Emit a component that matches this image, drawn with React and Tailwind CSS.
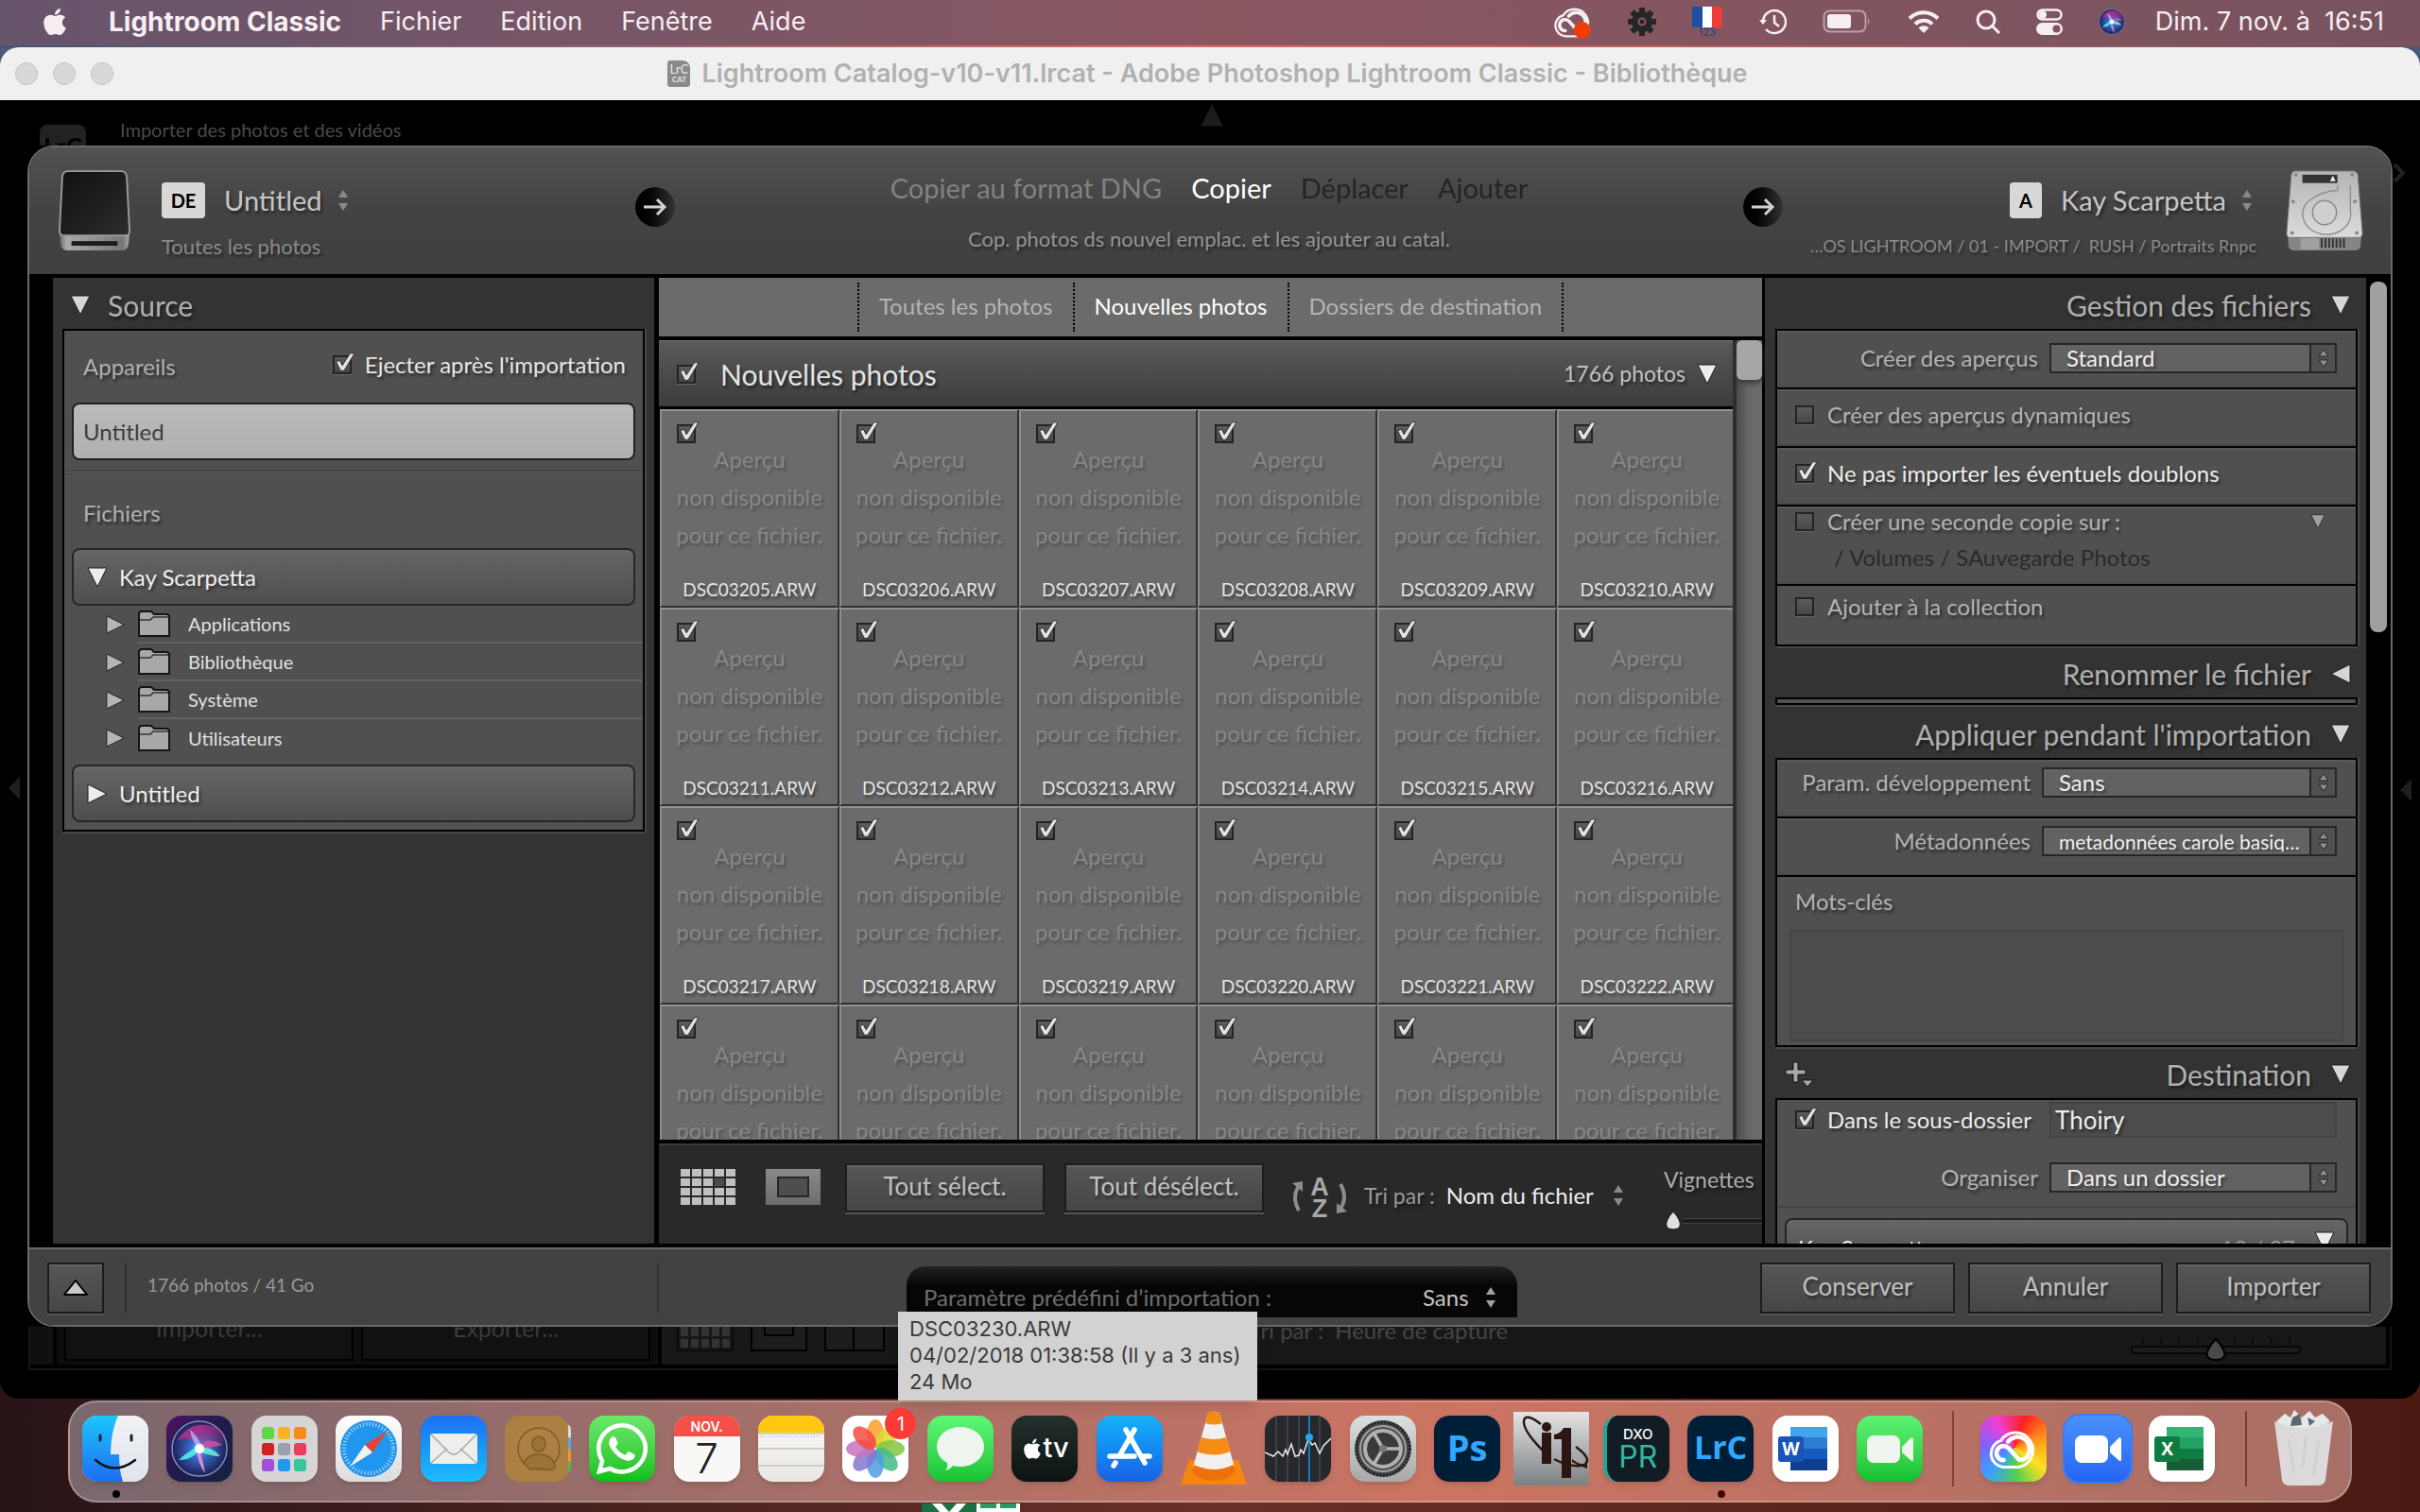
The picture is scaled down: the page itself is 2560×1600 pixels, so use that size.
import React from "react";
import { FaApple, FaWhatsapp } from "react-icons/fa";

const shadow = "[text-shadow:2px_3px_3px_rgba(0,0,0,0.45)]";
const lr = 'font-["Lato","Noto_Sans",sans-serif]';
const mac = 'font-["Inter","Liberation_Sans",sans-serif]';

/* ---------- small shared drawings ---------- */

function Tri({ dir = "down", size = 22, fill = "#d6d6d6" }) {
  const pts = {
    down: "1,1 21,1 11,21",
    up: "1,21 21,21 11,1",
    left: "21,1 21,21 1,11",
    right: "1,1 1,21 21,11",
  };
  return (
    <svg width={size} height={size} viewBox="0 0 22 22" className="shrink-0" aria-hidden="true">
      <polygon points={pts[dir]} fill={fill} stroke="#1c1c1c" strokeWidth="1" />
    </svg>
  );
}

function UpDown({ className = "text-[#8a8a8a]" }) {
  return (
    <svg width="12" height="24" viewBox="0 0 12 24" className={`shrink-0 ${className}`} aria-hidden="true">
      <path d="M6 1 11 9H1ZM6 23 1 15h10Z" fill="currentColor" />
    </svg>
  );
}

function Check({ checked = false, label }) {
  return (
    <span className="relative block size-5 shrink-0">
      <input
        type="checkbox"
        defaultChecked={checked}
        aria-label={label}
        className="peer block size-5 appearance-none border-2 border-[#232323] bg-linear-to-b from-[#5c5c5c] to-[#484848] shadow-[0_1px_0_#6a6a6a]"
      />
      <svg
        viewBox="0 0 26 26"
        className="pointer-events-none absolute -top-1 left-0 hidden size-6 peer-checked:block"
        aria-hidden="true"
      >
        <path d="M4 12 8 10 11 16 20 2 25 2 13 22 9 22Z" fill="#e2e2e2" stroke="#2a2a2a" strokeWidth="1" />
      </svg>
    </span>
  );
}

function Select({ label, value, width, size = "text-[24px]" }) {
  return (
    <label className="flex items-center justify-end gap-3">
      <span className={`text-[24px] leading-8 text-[#b3b3b3] ${shadow}`}>{label}</span>
      <span className={`relative block ${width}`}>
        <select
          className={`block h-8 w-full appearance-none truncate border-2 border-[#262626] bg-[#626262] pr-9 pl-4 leading-none text-[#efefef] ${size} ${shadow}`}
        >
          <option>{value}</option>
        </select>
        <span className="pointer-events-none absolute top-0 right-0 flex h-8 w-[29px] items-center justify-center border-2 border-[#262626] bg-[#505050]">
          <svg width="14" height="20" viewBox="0 0 14 20" aria-hidden="true">
            <path d="M7 1 12 8H2ZM7 19 2 12h10Z" fill="#8f8f8f" stroke="#222" />
          </svg>
        </span>
      </span>
    </label>
  );
}

function Button({ children, className = "" }) {
  return (
    <button
      type="button"
      className={`flex items-center justify-center border-2 border-[#1c1c1c] bg-linear-to-b from-[#565656] to-[#464646] text-[26px] leading-none text-[#c0c0c0] shadow-[0_2px_0_#555,inset_0_2px_0_#636363] ${shadow} ${className}`}
    >
      {children}
    </button>
  );
}

/* ---------- macOS menu bar ---------- */

const CloudPath = (
  <g fill="none" stroke="currentColor" strokeLinecap="round">
    <path d="M14 37A12.500 12.500 0 0 1 11.500 12.500 16 16 0 1 1 28 37Z" strokeWidth="2.600" />
    <path d="M14 30.500A6.500 6.500 0 1 1 18.500 19.500L28 30Q33 31 35.500 27" strokeWidth="4" />
    <path d="M18 13.500A10 10 0 1 1 35.500 27" strokeWidth="4" />
  </g>
);

function SiriOrb({ size }) {
  return (
    <svg width={size} height={size} viewBox="0 0 60 60" aria-hidden="true">
      <defs>
        <radialGradient id="orb" cx="50%" cy="50%" r="50%">
          <stop offset="0" stopColor="#8fe8ff" />
          <stop offset=".3" stopColor="#3a6fd0" />
          <stop offset="1" stopColor="#1b1f55" />
        </radialGradient>
        <linearGradient id="orb2" x1="0" y1="0" x2="1" y2="1">
          <stop offset="0" stopColor="#d62b88" />
          <stop offset="1" stopColor="#d62b88" stopOpacity="0" />
        </linearGradient>
      </defs>
      <circle cx="30" cy="30" r="29" fill="url(#orb)" stroke="#7f8fc0" strokeWidth="1.500" />
      <path d="M6 22Q20 0 42 6T54 28Q40 18 30 30 20 14 6 22Z" fill="url(#orb2)" />
      <path d="M30 28Q38 16 54 26 44 28 30 32Z" fill="#e04f9c" opacity=".8" />
      <path d="M30 30Q42 26 52 38 40 38 29 32Z" fill="#6ff0da" opacity=".85" />
      <path d="M30 30Q24 42 8 42 16 34 28 28Z" fill="#4ff0ea" opacity=".9" />
      <path d="M29 30Q34 42 36 56 28 46 27 30Z" fill="#f08fd8" opacity=".9" />
      <path d="M30 30Q22 24 20 10 30 18 32 29Z" fill="#b7c8ff" opacity=".7" />
      <circle cx="30" cy="30" r="5" fill="#fff" />
    </svg>
  );
}

function MenuBar() {
  return (
    <header
      className={`flex h-12 shrink-0 items-center justify-between bg-linear-to-r from-[#66546b] via-[#8a5761] to-[#78535f] pr-[38px] pb-[2px] pl-[42px] text-[27px] text-[#f6eef2] ${mac}`}
    >
      <nav className="flex items-center gap-[41px]">
        <FaApple className="size-8" />
        <button type="button" className="text-[28px] font-bold">Lightroom Classic</button>
        <button type="button">Fichier</button>
        <button type="button">Edition</button>
        <button type="button">Fenêtre</button>
        <button type="button">Aide</button>
      </nav>
      <div className="flex items-center">
        <div className="mr-8 flex items-center gap-[38px]">
          <svg width="42" height="36" viewBox="0 0 44 40" aria-hidden="true">
            {CloudPath}
            <circle cx="34" cy="30" r="10" fill="#f03c00" />
          </svg>
          <svg width="30" height="30" viewBox="0 0 30 30" aria-hidden="true">
            <g fill="#262626">
              <circle cx="15" cy="15" r="11" />
              {[0, 45, 90, 135, 180, 225, 270, 315].map((a) => (
                <rect key={a} x="12" y="0" width="6" height="6" transform={`rotate(${a} 15 15)`} />
              ))}
            </g>
            <circle cx="15" cy="15" r="3.500" fill="none" stroke="#8a5560" strokeWidth="2" />
          </svg>
          <span className="flex w-8 flex-col items-center">
            <span className="flex h-[22px] w-8">
              <span className="flex-1 bg-[#1f4fa0]" />
              <span className="flex-1 bg-white" />
              <span className="flex-1 bg-[#f03c38]" />
            </span>
            <span className="text-[11px] leading-none text-[#1f3f80]">123</span>
          </span>
          <svg width="30" height="28" viewBox="0 0 30 28" fill="none" stroke="currentColor" strokeWidth="2.500" aria-hidden="true">
            <path d="M5 14A12 12 0 1 1 8 22" />
            <path d="M17 7v8l5 4" />
            <path d="M1 12 9 12 5 17Z" fill="currentColor" stroke="none" />
          </svg>
          <svg width="52" height="26" viewBox="0 0 52 26" aria-hidden="true">
            <rect x="1.500" y="1.500" width="44" height="22" rx="6" fill="none" stroke="currentColor" strokeOpacity=".5" strokeWidth="2" />
            <rect x="5" y="5" width="25" height="15" rx="3" fill="currentColor" />
            <path d="M48 9q3 3.500 0 7Z" fill="currentColor" opacity=".5" />
          </svg>
          <svg width="34" height="26" viewBox="0 0 34 26" fill="none" stroke="currentColor" strokeWidth="4" aria-hidden="true">
            <path d="M2 9.500a21 21 0 0 1 30 0" />
            <path d="M8 15.500a12.500 12.500 0 0 1 18 0" />
            <path d="M17 25 11.500 19.500a8 8 0 0 1 11 0Z" fill="currentColor" stroke="none" />
          </svg>
          <svg width="26" height="26" viewBox="0 0 26 26" fill="none" stroke="currentColor" strokeWidth="3" aria-hidden="true">
            <circle cx="11" cy="11" r="9" />
            <path d="M18 18 25 25" />
          </svg>
          <svg width="28" height="28" viewBox="0 0 28 28" aria-hidden="true">
            <rect x="1.500" y="1.500" width="25" height="10" rx="5" fill="none" stroke="currentColor" strokeWidth="2.500" />
            <circle cx="7" cy="6.500" r="4" fill="currentColor" />
            <rect x="0" y="15" width="28" height="13" rx="6.500" fill="currentColor" />
            <circle cx="21.500" cy="21.500" r="4" fill="#82545f" />
          </svg>
          <SiriOrb size={28} />
        </div>
        <time className="whitespace-pre">Dim. 7 nov. à  16:51</time>
      </div>
    </header>
  );
}

function TitleBar() {
  return (
    <div className={`flex h-14 shrink-0 items-center rounded-t-[20px] bg-[#f0f0f0] px-4 ${mac}`}>
      <div className="flex w-[120px] gap-4">
        {["Fermer", "Réduire", "Agrandir"].map((n) => (
          <button key={n} type="button" aria-label={n} className="size-6 rounded-full border border-[#c2c2c2] bg-[#d8d8d8]" />
        ))}
      </div>
      <div className="flex flex-1 items-center justify-center gap-3 pr-[125px]">
        <span className='flex h-7 w-6 flex-col items-center justify-center rounded-[3px] rounded-tr-lg bg-[#8a8a8a] font-["Lato",sans-serif] text-[#e8e8e8]'>
          <span className="text-[13px] leading-[13px]">LrC</span>
          <span className="text-[8px] leading-[9px] font-bold">CAT</span>
        </span>
        <h1 className="text-[27px] font-semibold text-[#b1b1b1]">
          Lightroom Catalog-v10-v11.lrcat - Adobe Photoshop Lightroom Classic - Bibliothèque
        </h1>
      </div>
    </div>
  );
}

/* ---------- dialog header ---------- */

function DriveIcon() {
  return (
    <svg width="76" height="86" viewBox="0 0 78 88" aria-hidden="true">
      <defs>
        <linearGradient id="drv" x1="0" y1="0" x2="1" y2="1">
          <stop offset="0" stopColor="#101010" />
          <stop offset="1" stopColor="#2c2c2c" />
        </linearGradient>
        <linearGradient id="drvb" x1="0" y1="0" x2="1" y2="0">
          <stop offset="0" stopColor="#666" />
          <stop offset=".1" stopColor="#aaa" />
          <stop offset=".9" stopColor="#777" />
          <stop offset="1" stopColor="#aaa" />
        </linearGradient>
      </defs>
      <path d="M1 66 2 80Q3 87 9 87H69Q75 87 76 80L77 66Z" fill="url(#drvb)" />
      <path d="M10 1H68Q73 1 74 7L77 66Q77 71 72 71H6Q1 71 1 66L4 7Q5 1 10 1Z" fill="url(#drv)" stroke="#9a9a9a" strokeWidth="2" />
      <rect x="14" y="77" width="50" height="5" fill="#1c1c1c" />
    </svg>
  );
}

function HardDiskIcon() {
  return (
    <svg width="84" height="86" viewBox="0 0 84 88" aria-hidden="true">
      <defs>
        <linearGradient id="hd" x1="0" y1="0" x2="0" y2="1">
          <stop offset="0" stopColor="#b4b4b4" />
          <stop offset="1" stopColor="#dcdcdc" />
        </linearGradient>
      </defs>
      <path d="M2 70 3 82Q4 87 9 87H75Q80 87 81 82L82 70Z" fill="#858585" />
      <rect x="16" y="73" width="20" height="13" fill="#a0a0a0" />
      <g fill="#333">
        {[38, 42, 46, 50, 54, 58, 62].map((x) => (
          <rect key={x} x={x} y="74" width="2" height="10" />
        ))}
      </g>
      <path d="M10 1H73Q77 1 78 5L83 68Q83 73 79 73H5Q1 73 1 68L6 5Q7 1 10 1Z" fill="url(#hd)" stroke="#777" />
      <rect x="18" y="5" width="38" height="9" fill="#333" />
      <path d="M51 6 54 12H48Z" fill="#eee" />
      <path d="M56 17v5Q40 22 24 34A26 22 0 1 0 70 44V17" fill="none" stroke="#909090" strokeWidth="1.500" />
      <circle cx="42" cy="46" r="13" fill="#cfcfcf" stroke="#8a8a8a" strokeWidth="1.500" />
      <g fill="#888">
        <circle cx="11" cy="5" r="2" />
        <circle cx="72" cy="5" r="2" />
        <circle cx="8" cy="34" r="2" />
        <circle cx="75" cy="34" r="2" />
        <circle cx="7" cy="68" r="2" />
        <circle cx="77" cy="68" r="2" />
      </g>
    </svg>
  );
}

function ArrowDisc() {
  return (
    <span className="-mt-2 flex size-[42px] items-center justify-center rounded-full bg-linear-to-r from-black to-[#333]">
      <svg width="26" height="20" viewBox="0 0 26 20" fill="none" stroke="#d2d2d2" strokeWidth="3" aria-hidden="true">
        <path d="M1 10H23M15 2 23 10 15 18" />
      </svg>
    </span>
  );
}

function DialogHeader() {
  return (
    <div className="grid h-[134px] shrink-0 grid-cols-[641px_42px_1fr_42px_643px] items-center bg-linear-to-b from-[#525252] via-[#434343] to-[#404040]">
      <div className="flex items-center gap-[33px] pl-[31px]">
        <DriveIcon />
        <div className="flex flex-col gap-3 pt-5">
          <div className="flex items-center gap-5">
            <span className="flex h-[38px] w-[46px] items-center justify-center rounded bg-[#d8d8d8] text-[20px] font-bold text-black">DE</span>
            <button type="button" className={`flex items-center gap-4 text-[29px] leading-[42px] text-[#c6c6c6] ${shadow}`}>
              Untitled <UpDown />
            </button>
          </div>
          <span className={`text-[22px] leading-[31px] text-[#8a8a8a] ${shadow}`}>Toutes les photos</span>
        </div>
      </div>
      <ArrowDisc />
      <div className="flex flex-col items-center gap-4">
        <div className={`flex gap-[31px] text-[29px] ${shadow}`}>
          <button type="button" className="text-[#828282]">Copier au format DNG</button>
          <button type="button" className="text-white">Copier</button>
          <button type="button" className="text-[#242424] [text-shadow:none]">Déplacer</button>
          <button type="button" className="text-[#242424] [text-shadow:none]">Ajouter</button>
        </div>
        <span className={`text-[22px] leading-8 text-[#949494] ${shadow}`}>Cop. photos ds nouvel emplac. et les ajouter au catal.</span>
      </div>
      <ArrowDisc />
      <div className="flex items-center justify-end gap-[30px] pr-7">
        <div className="flex flex-col items-end gap-3 pt-5">
          <div className="flex items-center gap-5">
            <span className="flex h-[38px] w-[34px] items-center justify-center rounded bg-[#d8d8d8] text-[20px] font-bold text-black">A</span>
            <button type="button" className={`flex items-center gap-4 pr-1 text-[29px] leading-[42px] text-[#c6c6c6] ${shadow}`}>
              Kay Scarpetta <UpDown />
            </button>
          </div>
          <span className={`text-[18px] leading-[31px] whitespace-pre text-[#8a8a8a] ${shadow}`}>
            …OS LIGHTROOM / 01 - IMPORT /  RUSH / Portraits Rnpc
          </span>
        </div>
        <HardDiskIcon />
      </div>
    </div>
  );
}

/* ---------- left panel ---------- */

function Folder() {
  return (
    <svg width="34" height="28" viewBox="0 0 34 28" aria-hidden="true">
      <path d="M1 27V3L3 1H14L17 4H31L33 6V27Z" fill="#a8a8a8" stroke="#151515" strokeWidth="2" />
      <path d="M2 10H13L16 7H32" fill="none" stroke="#333" strokeWidth="1.500" />
    </svg>
  );
}

const volume =
  "mx-2 flex h-[61px] items-center gap-3 rounded-lg border-2 border-[#262626] bg-linear-to-b from-[#666] to-[#4e4e4e] pl-[14px] text-[24px] text-[#efefef]";

function SourcePanel() {
  return (
    <aside className="w-[636px] shrink-0 bg-[#333] px-[10px]">
      <h2 className={`flex h-[54px] items-center gap-[18px] pt-1 pl-2 text-[30px] leading-none text-[#b0b0b0] ${shadow}`}>
        <Tri />
        Source
      </h2>
      <div className="border-2 border-black bg-[#505050] pb-2 shadow-[0_2px_0_#484848,2px_0_0_#484848]">
        <div className="flex h-[76px] items-center justify-between pr-[18px] pl-5">
          <span className={`text-[24px] text-[#b0b0b0] ${shadow}`}>Appareils</span>
          <label className={`-mt-1 flex items-center gap-[14px] text-[24px] text-[#e6e6e6] ${shadow}`}>
            <Check checked />
            Ejecter après l'importation
          </label>
        </div>
        <button
          type="button"
          className="mx-2 flex h-[61px] w-[596px] max-w-full items-center rounded-lg border-2 border-[#202020] bg-linear-to-b from-[#bababa] to-[#b0b0b0] pl-[10px] text-[24px] text-[#3c3c3c]"
        >
          Untitled
        </button>
        <div className="mt-[10px] h-[83px] border-t-2 border-[#464646] pt-[26px] pl-5 shadow-[inset_0_1px_0_#5c5c5c]">
          <span className={`text-[24px] text-[#b0b0b0] ${shadow}`}>Fichiers</span>
        </div>
        <div className={`${volume} ${shadow}`}>
          <Tri fill="#ececec" />
          Kay Scarpetta
        </div>
        <ul>
          {["Applications", "Bibliothèque", "Système", "Utilisateurs"].map((n, i) => (
            <li key={n} className="flex h-10 items-center pl-11">
              <Tri dir="right" size={20} fill="#b5b5b5" />
              <span className={`ml-[14px] flex h-10 flex-1 items-center gap-[19px] text-[20px] text-[#e0e0e0] ${i < 3 ? "border-b-2 border-[#626262]" : ""}`}>
                <Folder />
                {n}
              </span>
            </li>
          ))}
        </ul>
        <div className={`mt-2 ${volume} ${shadow}`}>
          <Tri dir="right" fill="#ececec" />
          Untitled
        </div>
      </div>
    </aside>
  );
}

/* ---------- centre ---------- */

const files = Array.from({ length: 24 }, (_, i) => `DSC0${3205 + i}.ARW`);

function Cell({ name }) {
  return (
    <div className="flex h-[210px] flex-col border-t-2 border-r-2 border-b-2 border-l-2 border-t-[#929292] border-r-[#303030] border-b-[#303030] border-l-[#8c8c8c] bg-[#6b6b6b] pt-[14px]">
      <span className="pl-4">
        <Check checked label={name} />
      </span>
      <p className="-mt-[3px] text-center text-[24px] leading-[40px] text-[#878787] [text-shadow:2px_3px_3px_rgba(0,0,0,0.25)]">
        Aperçu
        <br />
        non disponible
        <br />
        pour ce fichier.
      </p>
      <p className={`mt-[22px] text-center text-[19px] leading-[32px] text-[#e4e4e4] ${shadow}`}>{name}</p>
    </div>
  );
}

function Center() {
  const sep = "h-[52px] border-l-2 border-dotted border-black";
  return (
    <main className="ml-[5px] flex min-w-0 flex-1 flex-col">
      <div className={`flex h-[62px] shrink-0 items-center justify-center gap-[21px] bg-[#6b6b6b] text-[24px] leading-8 text-[#b4b4b4] ${shadow}`}>
        <span className={sep} />
        <button type="button" className="pb-[3px]">Toutes les photos</button>
        <span className={sep} />
        <button type="button" className="pb-[3px] text-white">Nouvelles photos</button>
        <span className={sep} />
        <button type="button" className="pb-[3px]">Dossiers de destination</button>
        <span className={sep} />
      </div>
      <div className="mt-1 flex min-h-0 flex-1">
        <div className="flex min-w-0 flex-1 flex-col overflow-hidden">
          <div className="flex h-[70px] shrink-0 items-center border-t border-[#777] bg-linear-to-b from-[#5a5a5a] to-[#3c3c3c] pr-4 pl-[19px]">
            <Check checked label="Nouvelles photos" />
            <h2 className={`ml-[26px] flex-1 text-[30px] leading-none text-[#e4e4e4] ${shadow}`}>Nouvelles photos</h2>
            <span className={`mr-3 text-[23px] text-[#c2c2c2] ${shadow}`}>1766 photos</span>
            <Tri fill="#ececec" />
          </div>
          <div className="mt-[3px] -mr-1 ml-px grid shrink-0 grid-cols-6">
            {files.map((f) => (
              <Cell key={f} name={f} />
            ))}
          </div>
        </div>
        <div className="w-[31px] border-l-4 border-[#2e2e2e] bg-linear-to-r from-[#4c4c4c] via-[#696969] to-[#6b6b6b]">
          <div className="h-[42px] rounded-md bg-[#a6a6a6] shadow-[0_3px_6px_#333]" />
        </div>
      </div>
      <div className="mt-1 flex h-[106px] shrink-0 items-start border-t-2 border-[#3a3a3a] bg-[#292929] pt-[19px] pl-[23px]">
        <button type="button" aria-label="Grille" className="mt-1.5 grid h-[38px] w-[58px] shrink-0 grid-cols-5 gap-[2px]">
          {Array.from({ length: 20 }, (_, i) => (
            <span key={i} className={i === 8 ? "bg-[#4c4c4c]" : "bg-[#c0c0c0]"} />
          ))}
        </button>
        <button type="button" aria-label="Loupe" className="mt-1.5 ml-8 flex h-[38px] w-[58px] shrink-0 items-center justify-center bg-linear-to-b from-[#8a8a8a] to-[#6c6c6c]">
          <span className="h-[22px] w-[34px] border-2 border-[#262626] bg-[#4e4e4e]" />
        </button>
        <Button className="ml-[26px] h-[52px] w-[211px] shrink-0 pb-1">Tout sélect.</Button>
        <Button className="ml-[21px] h-[52px] w-[211px] shrink-0 pb-1">Tout désélect.</Button>
        <svg width="62" height="48" viewBox="0 0 62 48" className="mt-3 ml-7 shrink-0" aria-hidden="true">
          <g fill="none" stroke="#8c8c8c" strokeWidth="4">
            <path d="M9 38Q1 24 9 12" />
            <path d="M53 10Q61 24 53 36" />
          </g>
          <path d="M2 9 13 7 13 18ZM60 39 49 41 49 30Z" fill="#8c8c8c" />
          <g fill="#a8a8a8" fontFamily="Liberation Sans, sans-serif" fontWeight="700" fontSize="27" textAnchor="middle">
            <text x="31" y="22">A</text>
            <text x="31" y="45">Z</text>
          </g>
        </svg>
        <label className={`mt-4 ml-4 flex items-center gap-3 text-[23px] text-[#999] ${shadow}`}>
          Tri par :
          <select className="w-[164px] appearance-none text-[24px] text-[#ededed]">
            <option>Nom du fichier</option>
          </select>
          <UpDown />
        </label>
        <label className="ml-auto flex w-[104px] shrink-0 flex-col text-[23px] text-[#aaa]">
          <span className={shadow}>Vignettes</span>
          <span className="mt-4 flex h-5 items-center">
            <input type="range" min="0" max="100" defaultValue="0" className="sr-only" />
            <svg width="20" height="20" viewBox="0 0 20 20" aria-hidden="true">
              <path d="M10 0Q19 10 17 16 15 19 10 19T3 16Q1 10 10 0Z" fill="#e0e0e0" stroke="#111" />
            </svg>
            <span className="h-1.5 flex-1 border-y border-[#444] bg-[#1c1c1c]" />
          </span>
        </label>
      </div>
    </main>
  );
}

/* ---------- right panel ---------- */

function PanelTitle({ children, dir = "down", action }) {
  return (
    <h2 className={`flex h-[54px] shrink-0 items-center pt-1 pr-[7px] text-[30px] leading-none text-[#b0b0b0] ${shadow}`}>
      {action}
      <span className="ml-auto">{children}</span>
      <span className="ml-5 flex">
        <Tri dir={dir} />
      </span>
    </h2>
  );
}

const box = "border-2 border-black bg-[#505050] shadow-[0_2px_0_#484848,2px_0_0_#484848]";
const row = "border-b-2 border-black shadow-[inset_0_-2px_0_#484848,inset_0_2px_0_#5a5a5a]";

function Tick({ children, checked, className = "" }) {
  return (
    <label className={`flex items-center gap-[14px] pl-[19px] text-[24px] leading-[30px] ${shadow} ${checked ? "text-[#ececec]" : "text-[#b3b3b3]"} ${className}`}>
      <Check checked={checked} />
      {children}
    </label>
  );
}

function RightPanel() {
  return (
    <aside className="ml-[3px] flex w-[636px] shrink-0 flex-col overflow-hidden bg-[#333] pr-[9px] pl-[11px]">
      <PanelTitle>Gestion des fichiers</PanelTitle>
      <div className={`shrink-0 ${box}`}>
        <div className={`h-[62px] pt-[13px] pr-5 ${row}`}>
          <Select label="Créer des aperçus" value="Standard" width="w-[304px]" />
        </div>
        <div className={`h-[62px] pt-3 ${row}`}>
          <Tick>Créer des aperçus dynamiques</Tick>
        </div>
        <div className={`h-[62px] pt-3 ${row}`}>
          <Tick checked>Ne pas importer les éventuels doublons</Tick>
        </div>
        <div className={`h-[84px] ${row}`}>
          <div className="flex items-center justify-between pt-px pr-8">
            <Tick>Créer une seconde copie sur :</Tick>
            <Tri size={16} fill="#a0a0a0" />
          </div>
          <p className="pt-2 pl-[60px] text-[24px] leading-[30px] text-[#2a2a2a]">/ Volumes / SAuvegarde Photos</p>
        </div>
        <div className="h-[62px] pt-[7px]">
          <Tick>Ajouter à la collection</Tick>
        </div>
      </div>
      <PanelTitle dir="left">Renommer le fichier</PanelTitle>
      <div className={`h-2 shrink-0 ${box}`} />
      <div className="h-[2px] shrink-0" />
      <PanelTitle>Appliquer pendant l'importation</PanelTitle>
      <div className={`shrink-0 ${box}`}>
        <div className={`h-[62px] pt-2 pr-5 ${row}`}>
          <Select label="Param. développement" value="Sans" width="w-[312px]" />
        </div>
        <div className={`h-[62px] pt-2 pr-5 ${row}`}>
          <Select label="Métadonnées" value="metadonnées carole basiq…" width="w-[312px]" size="text-[21px]" />
        </div>
        <label className={`block px-[13px] pt-2 text-[24px] text-[#b3b3b3] ${shadow}`}>
          <span className="block pb-3 pl-[6px] leading-9">Mots-clés</span>
          <textarea className="mb-1 block h-[118px] w-full resize-none border-2 border-[#434343] bg-[#4c4c4c]" />
        </label>
      </div>
      <PanelTitle
        action={
          <button type="button" aria-label="Ajouter" className="ml-[10px]">
            <svg width="32" height="28" viewBox="0 0 32 28" aria-hidden="true">
              <path d="M9 1h5v8h8v5h-8v8H9v-8H1V9h8Z" fill="#a8a8a8" stroke="#111" />
              <path d="M18 20h12l-6 7Z" fill="#a8a8a8" stroke="#111" />
            </svg>
          </button>
        }
      >
        Destination
      </PanelTitle>
      <div className={`min-h-0 flex-1 overflow-hidden border-b-0! ${box}`}>
        <div className="flex items-center justify-between pt-[2px] pr-5">
          <Tick checked>Dans le sous-dossier</Tick>
          <input
            type="text"
            aria-label="Sous-dossier"
            defaultValue="Thoiry"
            className={`h-[38px] w-[304px] border-2 border-[#434343] bg-[#4c4c4c] px-1 text-[26px] text-[#ececec] ${shadow}`}
          />
        </div>
        <div className="h-[74px] border-b-2 border-[#444] pt-[26px] pr-5">
          <Select label="Organiser" value="Dans un dossier" width="w-[304px]" />
        </div>
        <div className={`mx-2 mt-[11px] flex h-[61px] items-start justify-between rounded-t-lg border-2 border-[#262626] bg-linear-to-b from-[#666] to-[#4e4e4e] px-3 pt-3 text-[24px] text-[#efefef] ${shadow}`}>
          Kay Scarpetta
          <span className="flex gap-5 text-[#999]">
            13 / 37 <Tri fill="#ececec" />
          </span>
        </div>
      </div>
    </aside>
  );
}

/* ---------- dialog footer ---------- */

function DialogFooter() {
  return (
    <footer className="relative flex h-[82px] shrink-0 items-start border-t-2 border-[#6a6a6a] bg-[#424242] pt-[14px] pr-[21px] pl-[19px]">
      <Button className="h-[54px] w-[60px]">
        <svg width="28" height="18" viewBox="0 0 28 18" aria-label="Réduire" role="img">
          <path d="M14 1 26 16H2Z" fill="#c8c8c8" stroke="#000" strokeWidth="2" strokeLinejoin="round" />
        </svg>
      </Button>
      <span className="ml-[22px] h-[54px] w-[2px] bg-[#303030]" />
      <span className="ml-[22px] w-[539px] self-start pt-[10px] text-[19px] text-[#9a9a9a]">1766 photos / 41 Go</span>
      <span className="h-[54px] w-[2px] bg-[#303030]" />
      <label className="mt-1 ml-[262px] flex h-[54px] w-[646px] items-center justify-between rounded-t-[20px] bg-linear-to-b from-[#222] to-[#060606] to-40% pt-3 pr-[22px] pl-[18px] text-[24px] text-[#6e6e6e]">
        Paramètre prédéfini d’importation :
        <span className="flex items-center gap-3 text-[#c4c4c4]">
          <select className="w-[54px] appearance-none">
            <option>Sans</option>
          </select>
          <UpDown className="text-[#a0a0a0]" />
        </span>
      </label>
      <div className="ml-auto flex gap-[14px]">
        <Button className="h-[54px] w-[206px] pb-1">Conserver</Button>
        <Button className="h-[54px] w-[206px] pb-1">Annuler</Button>
        <Button className="h-[54px] w-[206px] pb-1">Importer</Button>
      </div>
      <div className={`absolute top-[66px] left-[919px] z-10 w-[380px] bg-[#d2d2d2] px-3 pt-1 pb-[6px] text-[22px] leading-7 whitespace-nowrap text-[#3a3a3a] shadow-lg ${mac}`} role="tooltip">
        <p>DSC03230.ARW</p>
        <p>04/02/2018 01:38:58 (Il y a 3 ans)</p>
        <p>24 Mo</p>
      </div>
    </footer>
  );
}

/* ---------- library window behind the dialog ---------- */

const ghost =
  "flex h-9 flex-1 items-end justify-center overflow-hidden border-2 border-t-0 border-black bg-[#111] pb-5 text-[25px] leading-none text-[#3a3a3a]";

function BackStrip() {
  return (
    <div className="mx-[30px] flex h-[46px] shrink-0 items-stretch overflow-hidden border-x-2 border-b-2 border-[#161616] bg-black pr-1 pb-1">
      <div className="mr-1 w-6 bg-[#101010]" />
      <div className="flex w-[636px] items-start gap-2 bg-[#0d0d0d] px-2">
        <span className={ghost}>Importer...</span>
        <span className={ghost}>Exporter...</span>
      </div>
      <div className="ml-1 flex flex-1 items-start bg-[#171717] pr-[90px] pl-4">
        <span className="grid h-[26px] w-[60px] grid-cols-5 gap-[3px] border-2 border-t-0 border-[#0c0c0c] p-[2px] pt-0">
          {Array.from({ length: 10 }, (_, i) => (
            <span key={i} className="bg-[#333]" />
          ))}
        </span>
        <span className="ml-[18px] h-[26px] w-[60px] border-2 border-t-0 border-black bg-[#1c1c1c] px-3">
          <span className="block h-[10px] border-2 border-t-0 border-black" />
        </span>
        <span className="ml-[18px] h-[26px] w-8 border-2 border-t-0 border-black bg-[#1c1c1c]" />
        <span className="h-[26px] w-8 border-2 border-t-0 border-l-0 border-black bg-[#1c1c1c]" />
        <span className="-mt-3 ml-[386px] h-8 text-[24px] leading-8 whitespace-pre text-[#454545]">Tri par :  Heure de capture</span>
        <svg width="180" height="34" viewBox="0 0 180 34" className="mt-2 ml-auto" aria-hidden="true">
          <g fill="#0a0a0a">
            {[12, 31, 50, 70, 90, 109, 128, 148, 167].map((x) => (
              <rect key={x} x={x} y="4" width="2" height="7" />
            ))}
          </g>
          <rect x="1" y="13" width="178" height="7" rx="3" fill="#1c1c1c" stroke="#060606" strokeWidth="2" />
          <path d="M90 5Q101 17 99 23 97 27 90 27T81 23Q79 17 90 5Z" fill="#4a4a4a" stroke="#000" strokeWidth="2" />
        </svg>
      </div>
    </div>
  );
}

/* ---------- Dock ---------- */

function Tile({ className = "", children }) {
  return (
    <span className={`relative flex size-[70px] shrink-0 items-center justify-center overflow-hidden rounded-[16px] shadow-md ${className}`}>
      {children}
    </span>
  );
}

const Art = ({ children }) => (
  <svg width="70" height="70" viewBox="0 0 70 70" className="absolute inset-0" aria-hidden="true">
    {children}
  </svg>
);

const Camera = ({ fill }) => (
  <Art>
    <rect x="11" y="21" width="35" height="29" rx="7" fill={fill} />
    <path d="M48 33 57 24Q60 22 60 26V46Q60 50 57 47L48 39Z" fill={fill} />
  </Art>
);

function OfficeIcon({ letter, c }) {
  return (
    <Tile className="bg-white">
      <Art>
        <rect x="19" y="12" width="39" height="12" fill={c[0]} />
        <rect x="19" y="23" width="39" height="12" fill={c[1]} />
        <rect x="19" y="35" width="39" height="12" fill={c[2]} />
        <rect x="19" y="46" width="39" height="12" fill={c[3]} />
        <rect x="6" y="22" width="27" height="27" rx="3" fill={c[4]} />
        <text x="19.500" y="42" fill="#fff" fontFamily="Open Sans, sans-serif" fontWeight="700" fontSize="19" textAnchor="middle">
          {letter}
        </text>
      </Art>
    </Tile>
  );
}

const petals = ["#f9a02c", "#d9dc2e", "#84c440", "#45b88a", "#4f9de0", "#8577cc", "#c673bf", "#f44a42"];
const launch = ["#5ed84a", "#fbb320", "#f98a1c", "#d42020", "#9aa0a8", "#f03c5c", "#a050d8", "#1f9af0", "#35c89a"];

function DockApps() {
  return (
    <>
      <Tile className="bg-linear-to-b from-[#f2f2f5] to-[#dfe4ec]">
        <Art>
          <defs>
            <linearGradient id="fnd" x1="0" y1="0" x2="0" y2="1">
              <stop offset="0" stopColor="#1cc6fb" />
              <stop offset="1" stopColor="#1e6df0" />
            </linearGradient>
          </defs>
          <path d="M0 0H38Q30 18 30 41H39Q39 58 43 70H0Z" fill="url(#fnd)" />
          <path d="M19 21v5M52 21v5" stroke="#123" strokeWidth="3" strokeLinecap="round" />
          <path d="M14 47Q34 64 56 47" fill="none" stroke="#111" strokeWidth="2.500" strokeLinecap="round" />
        </Art>
      </Tile>
      <Tile className="bg-linear-to-br from-[#4a1260] via-[#1f1a4c] to-[#132340]">
        <SiriOrb size={60} />
      </Tile>
      <Tile className="bg-[#d8d5d7]">
        <span className="grid grid-cols-3 gap-1">
          {launch.map((c) => (
            <span key={c} className="size-[13px] rounded-[3px]" style={{ backgroundColor: c }} />
          ))}
        </span>
      </Tile>
      <Tile className="bg-linear-to-b from-white to-[#dcdcdc]">
        <Art>
          <circle cx="35" cy="35" r="30" fill="#2196ee" />
          <circle cx="35" cy="35" r="26" fill="none" stroke="#bfe0fa" strokeWidth="4" strokeDasharray="1 2.400" />
          <path d="M55 16 31 31 39 39Z" fill="#e5423a" />
          <path d="M15 54 31 31 39 39Z" fill="#f2f2f2" />
        </Art>
      </Tile>
      <Tile className="bg-linear-to-b from-[#1f6ef2] to-[#1dbdfc]">
        <Art>
          <rect x="10" y="19" width="50" height="32" rx="3" fill="#eeeeec" />
          <path d="M11 20 30 39Q35 43 40 39L59 20M11 50 28 35M59 50 42 35" fill="none" stroke="#a8a8a8" strokeWidth="1.500" />
        </Art>
      </Tile>
      <Tile className="bg-transparent shadow-none">
        <Art>
          <rect x="60" y="10" width="10" height="15" rx="3" fill="#d8d8d8" />
          <rect x="60" y="23" width="10" height="15" rx="3" fill="#56a8e0" />
          <rect x="60" y="36" width="10" height="14" rx="3" fill="#f09a20" />
          <rect x="60" y="48" width="10" height="13" rx="3" fill="#50b850" />
          <rect x="0" y="0" width="67" height="70" rx="14" fill="#ab8042" />
          <g fill="#9c7238" stroke="#7d5a28" strokeWidth="1.500">
            <circle cx="36" cy="35" r="22" fill="none" />
            <ellipse cx="36" cy="30" rx="7" ry="8" />
            <path d="M20 50Q24 41 36 41T52 50 43 57 29 57 20 50Z" />
          </g>
        </Art>
      </Tile>
      <Tile className="bg-linear-to-b from-[#6be86a] to-[#05c018]">
        <FaWhatsapp className="size-[62px] text-white" />
      </Tile>
      <Tile className={`flex-col bg-[#f8f8f7] ${mac}`}>
        <span className="flex h-[22px] w-full items-center justify-center bg-[#f3504a] text-[14px] font-semibold text-white">NOV.</span>
        <span className="flex-1 text-[44px] leading-[46px] font-light text-[#222]">7</span>
      </Tile>
      <Tile className="bg-linear-to-b from-[#fafafa] to-[#e9e7e2]">
        <Art>
          <rect width="70" height="18" fill="#fdc80f" />
          <path d="M0 19H70M0 35H70M0 53H70" stroke="#c4c4c0" strokeWidth="1.500" />
          <path d="M2 22H68" stroke="#999" strokeDasharray="1 2" />
        </Art>
      </Tile>
      <span className="relative flex shrink-0">
        <Tile className="bg-white">
          <Art>
            {petals.map((c, i) => (
              <ellipse key={c} cx="35" cy="19" rx="9" ry="15" fill={c} opacity=".85" transform={`rotate(${i * 45} 35 35)`} />
            ))}
          </Art>
        </Tile>
        <span className={`absolute -top-2 -right-2 flex size-[33px] items-center justify-center rounded-full bg-[#fb3b36] text-[20px] text-white ${mac}`}>1</span>
      </span>
      <Tile className="bg-linear-to-b from-[#5ff777] to-[#14c332]">
        <Art>
          <path d="M35 12C49 12 60 21 60 33S49 54 35 54Q30 54 27 53 24 57 19 58 22 55 21 50 10 44 10 33C10 21 21 12 35 12Z" fill="#eef5ee" />
        </Art>
      </Tile>
      <Tile className={`bg-linear-to-b from-[#24302e] to-[#0d1312] text-[29px] font-medium text-white ${mac}`}>
        <FaApple className="size-6 shrink-0" />
        <span className="pb-1 leading-none">tv</span>
      </Tile>
      <Tile className="bg-linear-to-b from-[#1ab2fb] to-[#1b60e6]">
        <Art>
          <g stroke="#fff" strokeWidth="5.500" strokeLinecap="round">
            <path d="M31 15 51 50M40 15 24 43M14 43H40M50 43H56M20 50 18 53" />
          </g>
        </Art>
      </Tile>
      <span className="flex w-[70px] shrink-0">
        <svg width="70" height="84" viewBox="0 0 70 84" className="-my-2" aria-hidden="true">
          <path d="M9 54H61L70 80H0Z" fill="#f7860c" />
          <path d="M29 4Q35 1 41 4L57 62Q50 70 35 70T13 62Z" fill="#f0f0f0" />
          <path d="M29 4Q35 1 41 4L44 15Q35 18 26 15Z" fill="#f78c14" />
          <path d="M22 30Q35 34 48 30L53 45Q35 52 17 45Z" fill="#f78c14" />
          <path d="M14 59Q35 69 56 59L58 66Q50 76 35 76T12 66Z" fill="#ee700c" />
        </svg>
      </span>
      <Tile className="bg-[#26282d]">
        <Art>
          <path d="M12 0V70M24 0V70M36 0V70M58 0V70" stroke="#55585e" />
          <path d="M0 39 9 43 14 38 19 43 22 36 24 41 28 30 32 43 36 42 38 36 41 40 46 25 50 31 53 29 58 40 62 32 70 24" fill="none" stroke="#eee" strokeWidth="1.500" />
          <path d="M47 0V70" stroke="#1398e8" strokeWidth="1.500" />
          <circle cx="47" cy="23" r="4" fill="#2aa4ee" />
        </Art>
      </Tile>
      <Tile className="bg-linear-to-b from-[#dcdfe0] to-[#a8a8a8]">
        <Art>
          <circle cx="35" cy="35" r="30" fill="#4a4c4e" />
          <circle cx="35" cy="35" r="28" fill="none" stroke="#1f1f1f" strokeWidth="3" strokeDasharray="2 1.500" />
          <circle cx="35" cy="35" r="24" fill="none" stroke="#a0a0a0" strokeWidth="2" />
          <circle cx="35" cy="35" r="19" fill="#3a3a3a" stroke="#b0b0b0" strokeWidth="4" />
          <path d="M35 35 25 18M35 35H54M35 35 25 52" stroke="#b5b5b5" strokeWidth="3.500" />
          <circle cx="35" cy="35" r="4" fill="#777" />
        </Art>
      </Tile>
      <Tile className='bg-[#001e36] pb-1 font-["Open_Sans",sans-serif] text-[38px] leading-none font-bold text-[#31a8ff]'>Ps</Tile>
      <span className="flex w-[70px] shrink-0 justify-center">
        <svg width="80" height="78" viewBox="0 0 80 78" className="-mx-[5px] shrink-0" aria-hidden="true">
          <defs>
            <linearGradient id="i1" x1="0" y1="0" x2="0" y2="1">
              <stop offset="0" stopColor="#e4e4e4" />
              <stop offset="1" stopColor="#7c8083" />
            </linearGradient>
          </defs>
          <rect width="80" height="78" fill="url(#i1)" />
          <path d="M30 22H40V55H30ZM43 24Q50 23 53 17H61V70H51V29H43Z" fill="#2c1614" />
          <circle cx="35" cy="16" r="5" fill="#2c1614" />
          <path d="M29 13Q12 0 11 10T32 42M43 50Q62 60 75 56 84 50 66 37" fill="none" stroke="#2c1614" strokeWidth="2.500" />
          <path d="M62 50Q72 58 78 54V60Q70 58 62 53Z" fill="#2c1614" />
        </svg>
      </span>
      <Tile className="flex-col border-l-4 border-[#1fa898] bg-[#121c24]">
        <span className={`text-[15px] leading-[18px] font-medium text-white ${mac}`}>DXO</span>
        <span className={`text-[32px] leading-[30px] font-normal text-[#33b5a2] ${mac}`}>PR</span>
      </Tile>
      <Tile className='bg-[#001e36] pb-1 font-["Open_Sans",sans-serif] text-[34px] leading-none font-bold text-[#31a8ff]'>LrC</Tile>
      <OfficeIcon letter="W" c={["#41a5ee", "#2b7cd3", "#185abd", "#103f91", "#1a55b5"]} />
      <Tile className="bg-linear-to-b from-[#5df374] to-[#12c02e]">
        <Camera fill="#eef5ee" />
      </Tile>
    </>
  );
}

function Dock() {
  return (
    <div className="relative mx-[72px] mt-[2px] flex h-[108px] items-center rounded-[30px] border-2 border-white/25 bg-linear-to-r from-[#7a676d] from-0% via-[#cc7462] via-60% to-[#a86f66] pr-[13px] pb-[6px] pl-[13px]">
      <div className="flex flex-1 items-center justify-between">
        <DockApps />
      </div>
      <span className="ml-[31px] h-20 w-[2px] bg-[#8c3f34]" />
      <div className="ml-[28px] flex items-center gap-[19px]">
        <Tile className="bg-[conic-gradient(from_20deg,#ff2020,#ff9a1c,#ffe020,#50d050,#3aa0ff,#8060ff,#f040d0,#ff2020)] text-white">
          <svg width="54" height="46" viewBox="0 0 46 40" aria-hidden="true">
            {CloudPath}
          </svg>
        </Tile>
        <Tile className="bg-linear-to-b from-[#4a90fb] to-[#2565f2] ring-2 ring-[#3a7cf8]">
          <Camera fill="#fff" />
        </Tile>
        <OfficeIcon letter="X" c={["#2fb673", "#21a366", "#107c41", "#185c37", "#107c41"]} />
      </div>
      <span className="ml-[32px] h-20 w-[2px] bg-[#7c3a30]" />
      <svg width="64" height="82" viewBox="0 0 64 82" className="mr-1 ml-[28px] shrink-0" aria-hidden="true">
        <path d="M3 12 12 4 18 8 22 0 30 8 38 1 44 8 52 4 60 12 50 20H12Z" fill="#e8e8e8" />
        <path d="M20 8 28 4 30 16 18 17ZM36 8 44 12 38 17Z" fill="#5a6a70" />
        <path d="M1 12Q30 26 63 12L55 74Q54 80 46 80H18Q10 80 9 74Z" fill="#dcdada" />
        <path d="M16 30 22 68M34 28 31 60M48 32 42 70" stroke="#cfcdcd" strokeWidth="2" />
      </svg>
      <span className="absolute bottom-[3px] left-[45px] h-2 w-2 rounded-full bg-black" />
      <span className="absolute right-[661px] bottom-[3px] h-2 w-2 rounded-full bg-[#400a08]" />
    </div>
  );
}

export default function App() {
  return (
    <div className="flex h-screen w-full flex-col overflow-hidden bg-linear-to-r from-[#281417] via-[#6b3027] to-[#4a1a12]">
      <MenuBar />
      <div className="h-[2px] shrink-0 bg-linear-to-r from-[#3f5275] via-[#e0685f] to-[#6f505c]" />
      <div className="flex min-h-0 flex-1 flex-col bg-[linear-gradient(to_bottom,#4a5a78_0_20px,transparent_20px)]">
        <TitleBar />
        <div className={`flex min-h-0 flex-1 flex-col rounded-b-[20px] bg-black leading-normal ${lr}`}>
          <div className="flex h-12 shrink-0 items-start overflow-hidden pl-[42px]">
            <span className="mt-[26px] flex h-12 w-[49px] items-start justify-center rounded-lg bg-[#222] pt-[10px] text-[26px] leading-none font-bold text-black">LrC</span>
            <span className="mt-[17px] ml-9 w-[308px] text-[20px] leading-7 whitespace-nowrap text-[#4a4a4a]">Importer des photos et des vidéos</span>
            <span className="mt-1 ml-[835px]">
              <Tri dir="up" size={24} fill="#1c1c1c" />
            </span>
          </div>
          <div className="flex min-h-0 flex-1">
            <div className="flex w-[29px] items-center justify-center pt-[110px]">
              <svg width="12" height="24" viewBox="0 0 12 24" aria-hidden="true">
                <path d="M12 0V24L0 12Z" fill="#1e1e1e" />
              </svg>
            </div>
            <section className="flex min-w-0 flex-1 flex-col rounded-[28px] border-2 border-[#6a6a6a] bg-black [&>div:first-child]:rounded-t-[26px] [&>footer]:rounded-b-[26px]">
              <DialogHeader />
              <div className="my-1 flex min-h-0 flex-1 pl-[25px]">
                <SourcePanel />
                <Center />
                <RightPanel />
                <div className="w-[26px] pt-1 pr-1 pl-1">
                  <div className="h-[371px] rounded-lg bg-[#a0a0a0]" />
                </div>
              </div>
              <DialogFooter />
            </section>
            <div className="flex w-[29px] flex-col items-start justify-between pt-[18px]">
              <svg width="14" height="22" viewBox="0 0 14 22" fill="none" stroke="#222" strokeWidth="4" aria-hidden="true">
                <path d="M2 2 11 11 2 20" />
              </svg>
              <svg width="12" height="24" viewBox="0 0 12 24" className="mb-[556px] ml-2" aria-hidden="true">
                <path d="M12 0V24L0 12Z" fill="#1e1e1e" />
              </svg>
            </div>
          </div>
          <BackStrip />
          <div className="h-[30px] shrink-0" />
        </div>
      </div>
      <div className="relative h-[120px] shrink-0">
        <Dock />
        <span className="absolute bottom-0 left-[975px] flex h-[9px] w-[104px] overflow-hidden bg-white">
          <span className="flex w-[58px] justify-center bg-[#1d7044]">
            <svg width="40" height="9" viewBox="0 0 40 9" aria-hidden="true">
              <path d="M2 0H12L20 9H10ZM28 0H38L30 9H20Z" fill="#fff" />
            </svg>
          </span>
          <span className="mx-1 mb-1 grid flex-1 grid-cols-2 gap-1">
            <span className="bg-[#2a9a62]" />
            <span className="bg-[#2a9a62]" />
          </span>
        </span>
      </div>
    </div>
  );
}
